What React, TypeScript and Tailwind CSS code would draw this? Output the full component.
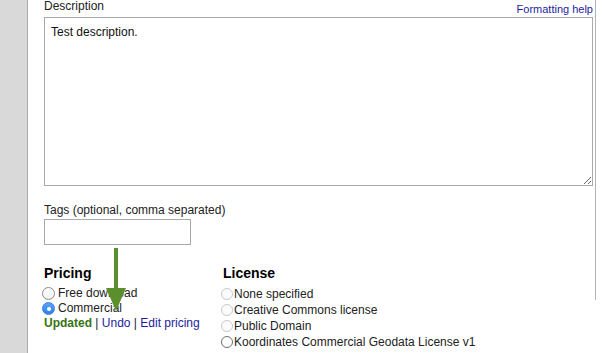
import React from "react";

function Radio({ label, checked = false, tone = "normal" }: { label: string; checked?: boolean; tone?: "normal" | "faint" | "dark" }) {
  if (tone === "normal") {
    return (
      <div className="flex h-[15px] items-center">
        {checked ? (
          <span className="ml-[-2px] mr-[3px] flex h-[13px] w-[13px] items-center justify-center rounded-full border border-[#3a7fe0] bg-[linear-gradient(#5aa2fb,#2f80ef)]">
            <span className="h-[4px] w-[4px] rounded-full bg-white" />
          </span>
        ) : (
          <span className="ml-[-2px] mr-[3px] h-[13px] w-[13px] rounded-full border border-[#8a8a8a] bg-[linear-gradient(#fff,#f1f1f1)]" />
        )}
        <span>{label}</span>
      </div>
    );
  }
  return (
    <div className="flex h-[16px] items-center">
      <span
        className={
          tone === "dark"
            ? "ml-[-1px] mr-[1px] h-[12px] w-[12px] rounded-full border border-[#6e6e6e] bg-white"
            : "ml-[-1px] mr-[1px] h-[12px] w-[12px] rounded-full border border-[#c9c9c9] bg-[#fbfbfb]"
        }
      />
      <span>{label}</span>
    </div>
  );
}

export default function App() {
  return (
    <div className="relative flex h-[353px] w-[602px] overflow-hidden bg-white font-['Liberation_Sans',Arial,sans-serif] text-[12px] text-[#222]">
      {/* side rail */}
      <div className="w-[28px] shrink-0 border-r border-[#ababab] bg-[#d9d9d9]" />

      <div className="w-[567px] shrink-0 pl-[16px]">
        <div className="flex h-[17px] w-[549px] justify-between leading-[14px]">
          <span className="mt-[-1px]">Description</span>
          <a className="mt-[2px] text-[11px] text-[#1d1d9e]">Formatting help</a>
        </div>
        <textarea
          defaultValue="Test description."
          className="block h-[169px] w-[549px] border border-[#a9a9a9] px-[6px] pt-[7px] text-[12px] leading-[14px] text-[#111] outline-none"
        />

        <div className="mt-[17px] leading-[14px]">Tags (optional, comma separated)</div>
        <input className="mt-[2px] block h-[26px] w-[147px] border border-[#a9a9a9] outline-none" />

        <div className="mt-[20px] flex">
          <div className="w-[178px]">
            <h3 className="text-[14px] font-bold leading-[16px] text-black">Pricing</h3>
            <div className="mt-[5px] leading-[15px]">
              <Radio label="Free download" />
              <Radio label="Commercial" checked />
              <div className="flex h-[15px] items-center">
                <span className="font-bold text-[#367314]">Updated</span>
                <span className="whitespace-pre"> | </span>
                <a className="text-[#1d1d9e]">Undo</a>
                <span className="whitespace-pre"> | </span>
                <a className="text-[#1d1d9e]">Edit pricing</a>
              </div>
            </div>
          </div>
          <div>
            <h3 className="ml-px text-[14px] font-bold leading-[16px] text-black">License</h3>
            <div className="mt-[5px] leading-[16px]">
              <Radio label="None specified" tone="faint" />
              <Radio label="Creative Commons license" tone="faint" />
              <Radio label="Public Domain" tone="faint" />
              <Radio label="Koordinates Commercial Geodata License v1" tone="dark" />
            </div>
          </div>
        </div>
      </div>

      {/* right edge of the panel */}
      <div className="h-[300px] w-px shrink-0 bg-[#b3b3b3]" />

      {/* annotation arrow */}
      <svg className="absolute left-[104px] top-[248px]" width="24" height="64" viewBox="0 0 24 64">
        <rect x="10" y="0" width="4" height="42" fill="#5b8f2b" />
        <polygon points="2,40 22,40 12,63" fill="#5b8f2b" />
      </svg>
    </div>
  );
}
